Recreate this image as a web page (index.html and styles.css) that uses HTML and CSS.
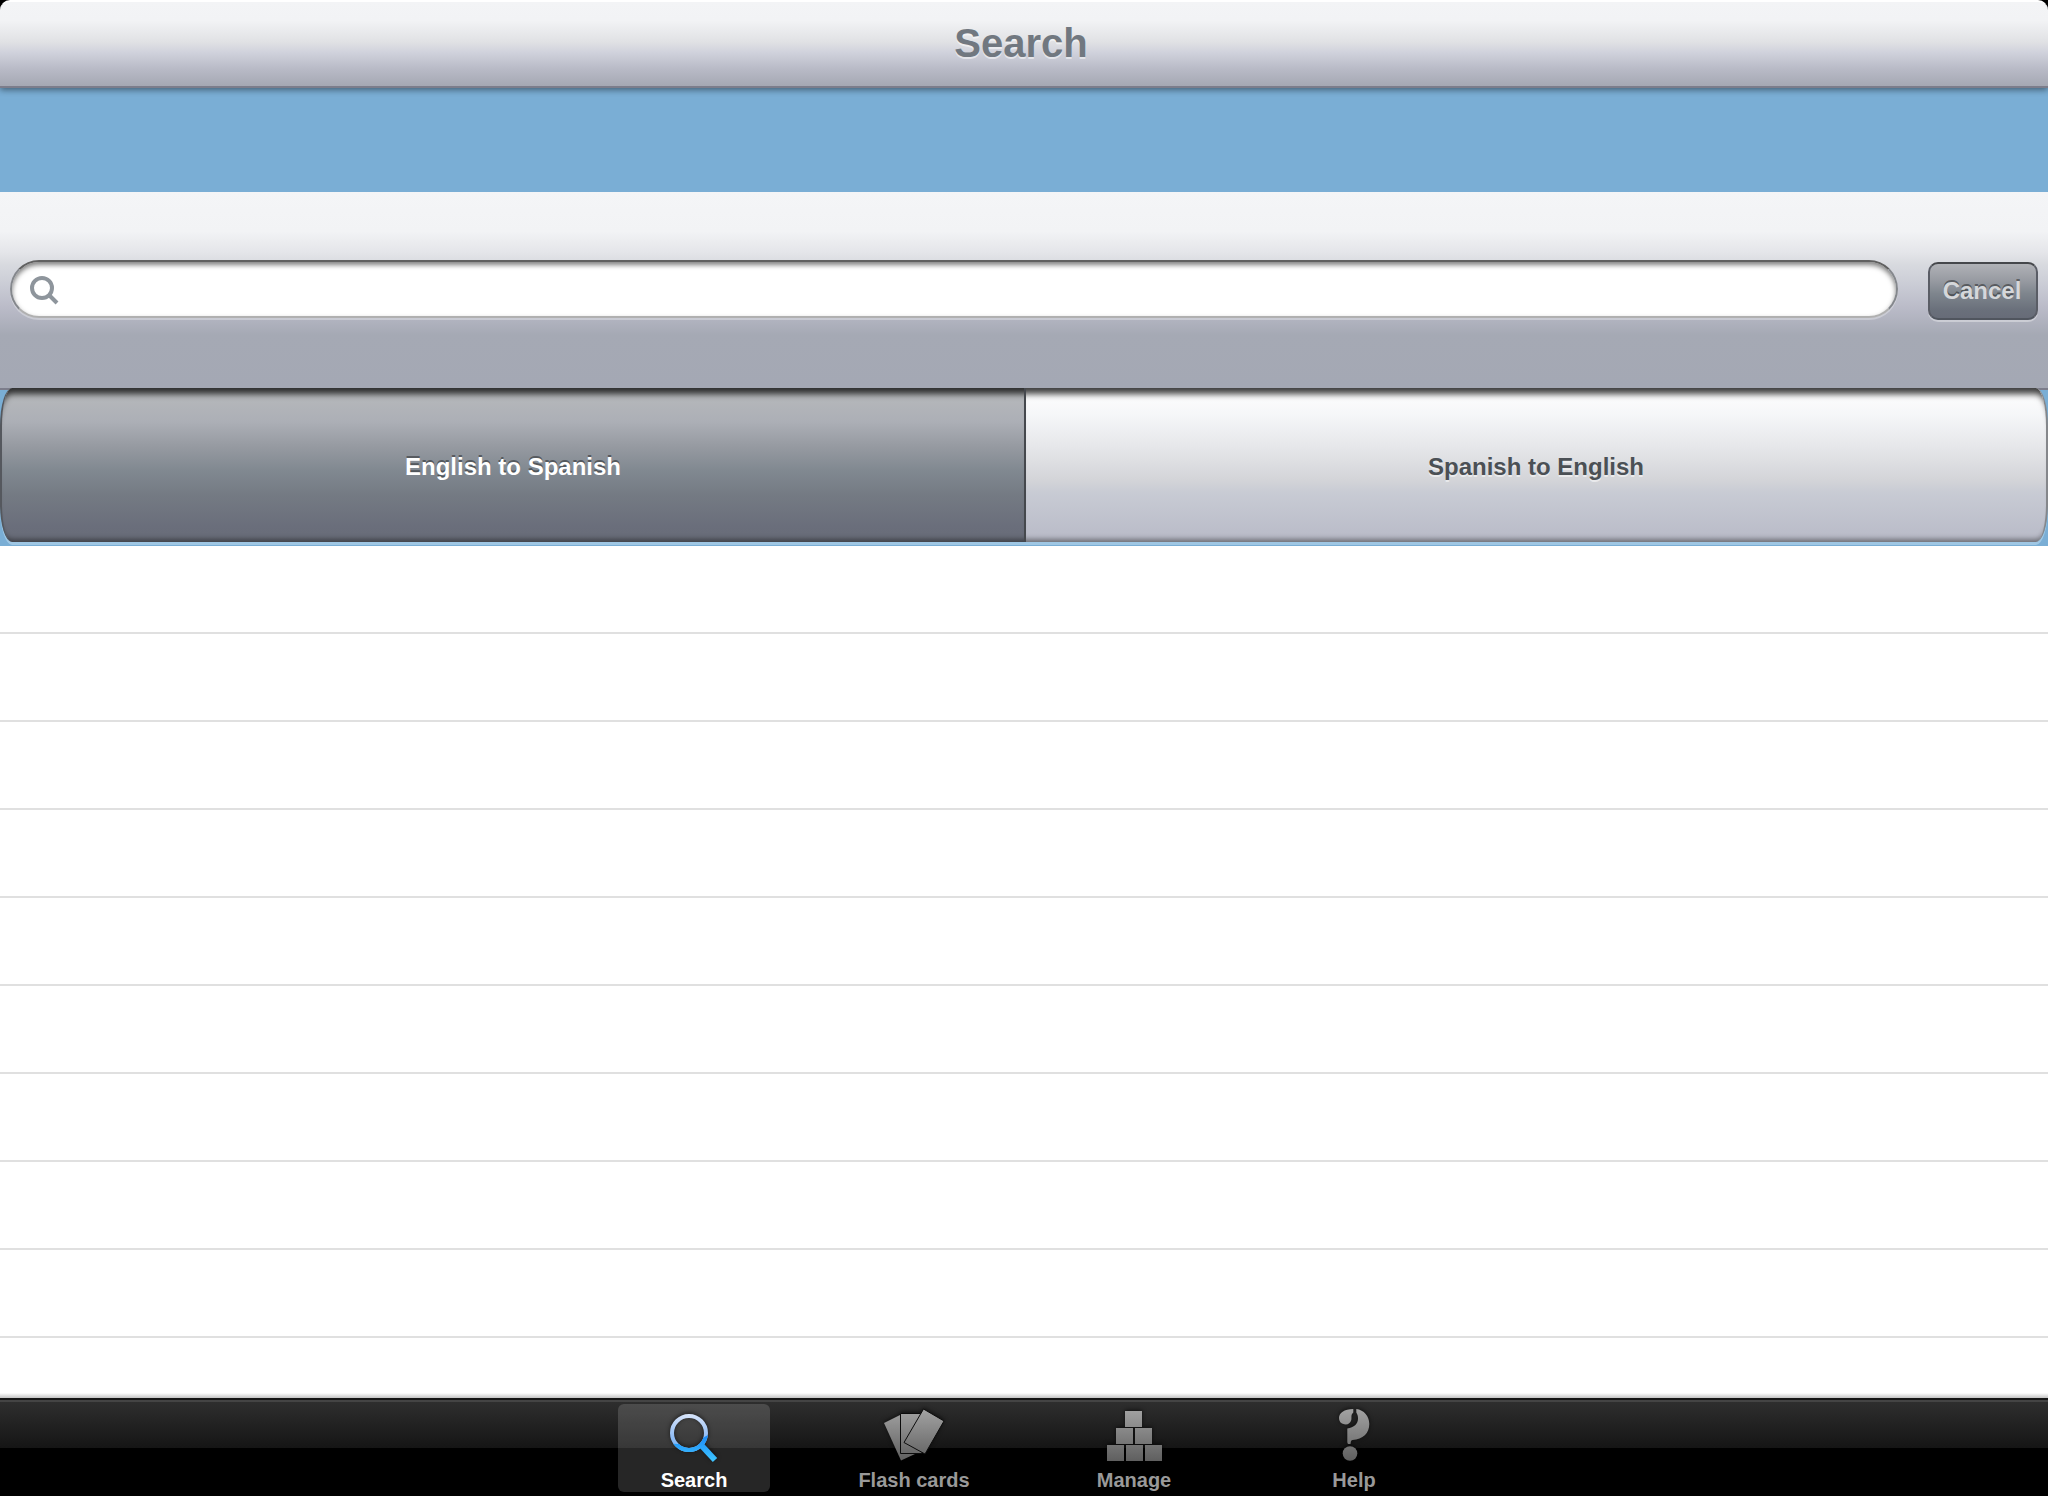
FILE: index.html
```html
<!DOCTYPE html>
<html lang="en">
<head>
<meta charset="utf-8">
<title>Search</title>
<meta name="viewport" content="width=device-width, initial-scale=1">
<link rel="stylesheet" href="styles.css">
</head>
<body>
<div class="app">
  <header class="title-bar"><h1 class="title">Search</h1></header>
  <main class="content">
    <form class="search-bar">
      <div class="search-field">
        <svg class="search-glyph" viewBox="0 0 32 32" aria-hidden="true"><circle cx="14" cy="14" r="10"/><path d="M20.500 20.500L29 29"/></svg>
        <input class="search-input" type="search" aria-label="Search words">
      </div>
      <button class="cancel" type="button">Cancel</button>
    </form>
    <div class="segments">
      <button class="segment segment-on" type="button" aria-pressed="true">English to Spanish</button>
      <button class="segment" type="button" aria-pressed="false">Spanish to English</button>
    </div>
    <ul class="results">
      <li class="row"></li><li class="row"></li><li class="row"></li><li class="row"></li><li class="row"></li>
      <li class="row"></li><li class="row"></li><li class="row"></li><li class="row"></li><li class="row"></li>
    </ul>
  </main>
  <nav class="tab-bar">
    <a class="tab tab-on" href="#search">
      <svg class="tab-icon" viewBox="0 0 64 60" aria-hidden="true">
        <defs>
          <linearGradient id="blue" gradientUnits="userSpaceOnUse" x1="0" y1="9" x2="0" y2="58">
            <stop offset="0" stop-color="#dbe6fa"/><stop offset=".5" stop-color="#8fbcf5"/><stop offset="1" stop-color="#6cb0f4"/>
          </linearGradient>
          <linearGradient id="deep" gradientUnits="userSpaceOnUse" x1="0" y1="32" x2="0" y2="58">
            <stop offset="0" stop-color="#1c8bf8"/><stop offset="1" stop-color="#3fc6ff"/>
          </linearGradient>
          <clipPath id="lower"><path d="M0 38Q26 44 46 31L64 30V60H0z"/></clipPath>
        </defs>
        <g fill="none" stroke-width="4"><circle cx="27" cy="29" r="17" stroke="url(#blue)"/>
        <g clip-path="url(#lower)" stroke="url(#deep)"><circle cx="27" cy="29" r="17"/><path d="M39 41l14 15" stroke-width="6"/></g></g>
      </svg>
      <span class="tab-label">Search</span>
    </a>
    <a class="tab" href="#cards">
      <svg class="tab-icon" viewBox="0 0 64 60" aria-hidden="true">
        <defs><linearGradient id="gray" gradientUnits="userSpaceOnUse" x1="0" y1="4" x2="0" y2="58">
          <stop offset="0" stop-color="#a4a4a4"/><stop offset="1" stop-color="#5e5e5e"/>
        </linearGradient></defs>
        <g fill="url(#gray)">
          <path d="M2 19L18 11L33 50L19 56.500z"/>
          <path d="M18.500 9.500H40V49.500H18.500z" stroke="#0c0c0c"/>
          <path d="M41.500 5L62 17L43 50L22 38.500z" stroke="#0c0c0c"/>
        </g>
      </svg>
      <span class="tab-label">Flash cards</span>
    </a>
    <a class="tab" href="#manage">
      <svg class="tab-icon" viewBox="0 0 64 60" aria-hidden="true">
        <path fill="url(#gray)" d="M23 7h17v16H23zM14 24h17v16H14zM33 24h17v16H33zM5 41h17v16H5zM24 41h17v16H24zM43 41h17v16H43z"/>
      </svg>
      <span class="tab-label">Manage</span>
    </a>
    <a class="tab" href="#help">
      <svg class="tab-icon" viewBox="0 0 64 60" aria-hidden="true">
        <g fill="url(#gray)">
          <path d="M31.300 5C22 5 17 9 17 14A6.300 6.300 0 0 0 29.300 16C30 13 28.500 11 31.300 8.500z"/>
          <path d="M34.300 5C42 6 47.300 12 47.300 20C47.300 29 41 35.500 30.500 36C28.500 36.500 29 38 28.500 40H26Q25.300 39 25.300 38V24.500C32 23.500 36 20 36 14.500C36 12 35.500 10.500 34.300 8.500z"/>
          <circle cx="28" cy="49.500" r="7.300"/>
        </g>
      </svg>
      <span class="tab-label">Help</span>
    </a>
  </nav>
</div>
</body>
</html>
```
FILE: styles.css
```css
* { box-sizing: border-box; }

body {
  margin: 0;
  background: #000;
  font-family: "Liberation Sans", Arial, sans-serif;
  font-weight: bold;
}

button, input { font: inherit; }

.app {
  display: flex;
  flex-direction: column;
  height: 100vh;
}

.title-bar {
  position: relative;
  height: 88px;
  flex: none;
  padding-bottom: 2px;
  border-top: 2px solid #fff;
  border-bottom: 2px solid #7c7d8b;
  border-radius: 10px 10px 0 0;
  background: linear-gradient(#f3f4f6 0%, #f2f3f5 22%, #e0e1e4 48%, #d0d2dc 60%, #b8bac6 80%, #a5a8b3 100%);
  box-shadow: 0 2px 6px rgba(0, 0, 0, .45);
  display: flex;
  align-items: center;
  justify-content: center;
}

.title {
  margin: 0;
  padding-right: 6px;
  font-size: 40px;
  line-height: 48px;
  color: #717880;
  text-shadow: 0 2px 0 rgba(255, 255, 255, .5);
}

.content {
  flex: 1;
  min-height: 0;
  display: flex;
  flex-direction: column;
  padding-top: 104px;
  background: #7aaed5;
}

.search-bar {
  flex: none;
  display: flex;
  align-items: flex-start;
  gap: 30px;
  height: 198px;
  padding: 68px 10px 0;
  border-bottom: 2px solid #7c7d8b;
  background: linear-gradient(#f4f5f7 0%, #f2f3f5 20%, #e4e5e9 31%, #d8dadf 37%, #ccced7 46%, #babbc8 59%, #a5a9b4 73%, #a4a8b4 100%);
}

.search-field {
  position: relative;
  flex: 1;
}

.search-input {
  display: block;
  width: 100%;
  height: 58px;
  padding: 0 28px 0 60px;
  border: 2px solid;
  border-color: #606060 #84878c #b0b0b0;
  border-radius: 29px;
  background: #fff;
  box-shadow: inset 0 3px 5px rgba(0, 0, 0, .5), 0 2px 0 rgba(255, 255, 255, .3);
  font-size: 28px;
  font-weight: normal;
  appearance: none;
}

.search-glyph {
  position: absolute;
  left: 18px;
  top: 14px;
  width: 32px;
  height: 32px;
  fill: none;
  stroke: #8e959c;
  stroke-width: 4;
}

.cancel {
  width: 110px;
  height: 58px;
  margin-top: 2px;
  padding: 0 2px 0 0;
  border: 2px solid;
  border-color: #45474b #5a5d66 #50555e;
  border-radius: 10px;
  background: linear-gradient(#b0b2b7 0%, #989ba2 30%, #7e858d 55%, #6a707b 85%, #676c78 100%);
  box-shadow: 0 2px 0 rgba(255, 255, 255, .35);
  color: #d5d7da;
  font-size: 24px;
  text-shadow: 0 -2px 0 rgba(0, 0, 0, .4);
}

.segments {
  position: relative;
  flex: none;
  display: grid;
  grid-template-columns: calc(50% + 2px) 1fr;
  height: 158px;
  margin-top: -2px;
  padding-bottom: 4px;
}

.segment {
  padding: 4px 0 0;
  border: 0;
  border-right: 2px solid #85878b;
  border-radius: 0 12px 12px 0 / 0 38px 38px 0;
  background: linear-gradient(#fff 0%, #f5f6f8 18%, #e6e7ea 38%, #d3d4d8 60%, #c8cbd4 68%, #b8bac7 100%);
  box-shadow: inset 0 12px 6px -6px rgba(0, 0, 0, .75), inset 0 -9px 5px -6px rgba(0, 0, 0, .4), 0 3px 0 rgba(190, 220, 240, .55);
  color: #4b5055;
  font-size: 24px;
  text-shadow: 0 2px 0 rgba(255, 255, 255, .5);
}

.segment-on {
  border-right: 2px solid #45484d;
  border-left: 2px solid #55585e;
  border-radius: 12px 0 0 12px / 38px 0 0 38px;
  background: linear-gradient(#b8babc 0%, #acafb6 22%, #969aa1 38%, #808890 54%, #747a83 70%, #6a6e7b 90%, #686c78 100%);
  color: #fff;
  text-shadow: 0 -2px 0 rgba(0, 0, 0, .4);
}

.results {
  flex: 1;
  min-height: 0;
  margin: 0;
  padding: 0;
  overflow: hidden;
  list-style: none;
  background: linear-gradient(transparent calc(100% - 5px), #c4c4c4) #fff;
}

.row {
  height: 88px;
  border-bottom: 2px solid #e0e0e0;
}

.tab-bar {
  flex: none;
  display: flex;
  justify-content: center;
  gap: 68px;
  height: 98px;
  padding-top: 4px;
  border-top: 2px solid #161616;
  background: linear-gradient(#444 0 2px, #2e2e2e 2px, #151515 48px, #000 48px);
}

.tab {
  display: flex;
  flex-direction: column;
  align-items: center;
  gap: 4px;
  width: 152px;
  height: 88px;
  border-radius: 6px;
  color: #999;
  text-decoration: none;
}

.tab-on {
  background: rgba(255, 255, 255, .15);
  color: #fff;
}

.tab-icon {
  width: 64px;
  height: 60px;
  filter: drop-shadow(0 -1px 2px rgba(0, 0, 0, .6));
}

.tab-label {
  font-size: 20px;
  line-height: 24px;
}
```
